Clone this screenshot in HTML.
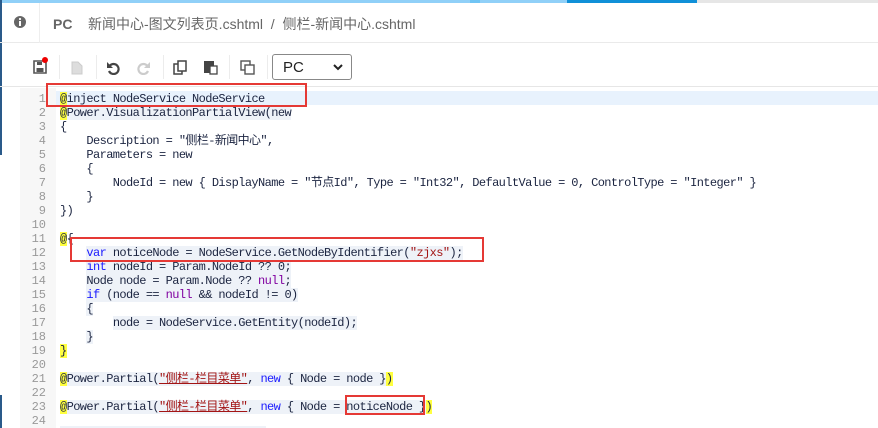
<!DOCTYPE html>
<html><head><meta charset="utf-8"><style>
*{margin:0;padding:0;box-sizing:border-box}
body{width:878px;height:428px;overflow:hidden;background:#fff;position:relative;font-family:"Liberation Sans","Noto Sans CJK SC",sans-serif}
.top{position:absolute;left:0;top:0;width:878px;height:3px;background:#e6e6e6}
.top i{position:absolute;top:0;height:3px}
.hdr{position:absolute;left:0;top:3px;width:878px;height:40px;border-bottom:1px solid #eaeaea}
.tb{position:absolute;left:0;top:43px;width:878px;height:44px;border-bottom:1px solid #e6e6e6}
.sep{position:absolute;top:12px;width:1px;height:24px;background:#ececec}
.gut{position:absolute;left:20px;top:88px;width:36px;height:340px;background:#f7f7f7}
.ln{position:absolute;left:20px;width:26px;text-align:right;font:12px/14px "Liberation Mono","Noto Sans CJK SC",monospace;color:#999;margin-top:1px}
.c{position:absolute;left:60px;white-space:pre;font:12px/14px "Liberation Mono","Noto Sans CJK SC",monospace;letter-spacing:-0.6px;color:#1b2440;margin-top:1px}
.bg{background:#eef2f8}
.k{color:#1a1aff}.p{color:#8000a0}.s{color:#a31515}.y{background:#ffff40}.su{color:#a31515;text-decoration:underline}
.rb{position:absolute;border:2px solid #e53935}
</style></head><body>
<div class="top"><i style="left:0;width:567px;background:#90d0f8"></i><i style="left:470px;width:10px;background:#70c4f4"></i><i style="left:567px;width:130px;background:#1090d8"></i></div>
<div style="position:absolute;left:0;top:0;width:2px;height:155px;background:#2a5a8a"></div>
<div style="position:absolute;left:0;top:395px;width:2px;height:33px;background:#2a5a8a"></div>
<div class="hdr">
<svg style="position:absolute;left:13px;top:12px" width="14" height="14" viewBox="0 0 14 14"><circle cx="7" cy="7" r="6" fill="#666"/><rect x="6" y="6" width="2" height="5" fill="#fff"/><circle cx="7" cy="4" r="1.1" fill="#fff"/></svg>
<div style="position:absolute;left:39px;top:0;width:1px;height:40px;background:#eee"></div>
<div style="position:absolute;left:53px;top:11px;font-size:14px;color:#666;white-space:pre"><b>PC</b>    新闻中心-图文列表页.cshtml  /  侧栏-新闻中心.cshtml</div>
</div>
<div class="tb">
<svg style="position:absolute;left:33px;top:17px" width="14" height="14" viewBox="0 0 14 14"><path d="M1 1h10l2 2v10H1z" fill="none" stroke="#555" stroke-width="1.6"/><rect x="4" y="2" width="5" height="3" fill="#555"/><rect x="3.5" y="8" width="7" height="4" fill="#555"/></svg>
<div style="position:absolute;left:42px;top:14px;width:6px;height:6px;border-radius:50%;background:#e00"></div>
<div class="sep" style="left:59px"></div>
<svg style="position:absolute;left:71px;top:18px" width="12" height="14" viewBox="0 0 12 14"><path d="M1 1h6l4 4v8H1z" fill="#ddd" stroke="#ccc"/></svg>
<div class="sep" style="left:96px"></div>
<svg style="position:absolute;left:106px;top:18px" width="14" height="14" viewBox="0 0 14 14"><path d="M4 4.5A5 5 0 1 1 3 10" fill="none" stroke="#444" stroke-width="2.2"/><path d="M1 1v6h6z" fill="#444"/></svg>
<svg style="position:absolute;left:137px;top:18px" width="14" height="14" viewBox="0 0 14 14"><path d="M10 4.5A5 5 0 1 0 11 10" fill="none" stroke="#ccc" stroke-width="2.2"/><path d="M13 1v6H7z" fill="#ccc"/></svg>
<div class="sep" style="left:163px"></div>
<svg style="position:absolute;left:173px;top:17px" width="15" height="15" viewBox="0 0 15 15"><rect x="1" y="4" width="8" height="10" fill="none" stroke="#444" stroke-width="1.5"/><rect x="5" y="1" width="8" height="10" fill="#fff" stroke="#444" stroke-width="1.5"/></svg>
<svg style="position:absolute;left:203px;top:16px" width="15" height="16" viewBox="0 0 15 16"><rect x="1" y="2" width="10" height="12" fill="#444"/><rect x="7" y="7" width="7" height="8" fill="#fff" stroke="#444" stroke-width="1.3"/></svg>
<div class="sep" style="left:229px"></div>
<svg style="position:absolute;left:240px;top:17px" width="15" height="15" viewBox="0 0 15 15"><rect x="1" y="1" width="9" height="9" fill="none" stroke="#555" stroke-width="1.4"/><rect x="5" y="5" width="9" height="9" fill="#fff" stroke="#555" stroke-width="1.4"/></svg>
<div class="sep" style="left:267px"></div>
<div style="position:absolute;left:272px;top:11px;width:80px;height:26px;border:1px solid #888;border-radius:3px;font-size:15px;color:#222;padding:4px 0 0 10px">PC
<svg style="position:absolute;right:8px;top:9px" width="10" height="7" viewBox="0 0 10 7"><path d="M1 1l4 4 4-4" fill="none" stroke="#222" stroke-width="2"/></svg></div>
</div>
<div class="gut"></div>
<div style="position:absolute;left:56px;top:91px;width:822px;height:14px;background:#e8f2fd"></div>
<div class="ln" style="top:91px">1</div><div class="ln" style="top:105px">2</div><div class="ln" style="top:119px">3</div><div class="ln" style="top:133px">4</div><div class="ln" style="top:147px">5</div><div class="ln" style="top:161px">6</div><div class="ln" style="top:175px">7</div><div class="ln" style="top:189px">8</div><div class="ln" style="top:203px">9</div><div class="ln" style="top:217px">10</div><div class="ln" style="top:231px">11</div><div class="ln" style="top:245px">12</div><div class="ln" style="top:259px">13</div><div class="ln" style="top:273px">14</div><div class="ln" style="top:287px">15</div><div class="ln" style="top:301px">16</div><div class="ln" style="top:315px">17</div><div class="ln" style="top:329px">18</div><div class="ln" style="top:343px">19</div><div class="ln" style="top:357px">20</div><div class="ln" style="top:371px">21</div><div class="ln" style="top:385px">22</div><div class="ln" style="top:399px">23</div><div class="ln" style="top:413px">24</div>
<div class="c" style="top:91px"><span class="y">@</span>inject NodeService NodeService</div>
<div class="c" style="top:105px"><span class="bg"><span class="y">@</span>Power.VisualizationPartialView(new</span></div>
<div class="c" style="top:119px">{</div>
<div class="c" style="top:133px">    Description = "侧栏-新闻中心",</div>
<div class="c" style="top:147px">    Parameters = new</div>
<div class="c" style="top:161px">    {</div>
<div class="c" style="top:175px">        NodeId = new { DisplayName = "节点Id", Type = "Int32", DefaultValue = 0, ControlType = "Integer" }</div>
<div class="c" style="top:189px">    }</div>
<div class="c" style="top:203px">})</div>
<div class="c" style="top:231px"><span class="y">@</span>{</div>
<div class="c" style="top:245px">    <span class="bg"><span class="k">var</span> noticeNode = NodeService.GetNodeByIdentifier(<span class="s">"zjxs"</span>);</span></div>
<div class="c" style="top:259px">    <span class="bg"><span class="k">int</span> nodeId = Param.NodeId ?? 0;</span></div>
<div class="c" style="top:273px">    <span class="bg">Node node = Param.Node ?? <span class="p">null</span>;</span></div>
<div class="c" style="top:287px">    <span class="bg"><span class="k">if</span> (node == <span class="p">null</span> &amp;&amp; nodeId != 0)</span></div>
<div class="c" style="top:301px">    <span class="bg">{</span></div>
<div class="c" style="top:315px">        <span class="bg">node = NodeService.GetEntity(nodeId);</span></div>
<div class="c" style="top:329px">    <span class="bg">}</span></div>
<div class="c" style="top:343px"><span class="y">}</span></div>
<div class="c" style="top:371px"><span class="bg"><span class="y">@</span>Power.Partial(<span class="su">"侧栏-栏目菜单"</span>, <span class="k">new</span> { Node = node }</span><span class="y">)</span></div>
<div class="c" style="top:399px"><span class="bg"><span class="y">@</span>Power.Partial(<span class="su">"侧栏-栏目菜单"</span>, <span class="k">new</span> { Node = noticeNode }</span><span class="y">)</span></div>
<div style="position:absolute;left:60px;top:426px;width:206px;height:2px;background:#eef2f8"></div>
<div class="rb" style="left:46px;top:83px;width:261px;height:24px"></div>
<div class="rb" style="left:70px;top:237px;width:414px;height:25px"></div>
<div class="rb" style="left:345px;top:395px;width:80px;height:20px"></div>
</body></html>
